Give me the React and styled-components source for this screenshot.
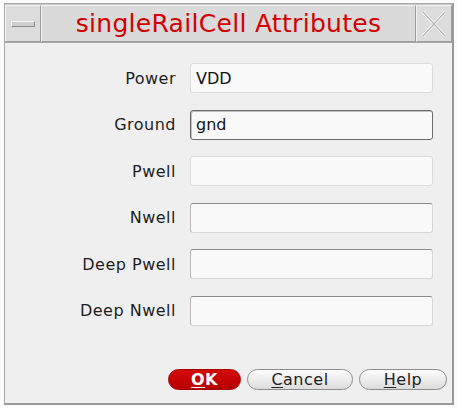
import styled, { createGlobalStyle } from "styled-components";

const GlobalStyle = createGlobalStyle`
  html, body {
    margin: 0;
    padding: 0;
    background: #fbfbfb;
    font-family: "DejaVu Sans", "Liberation Sans", sans-serif;
  }
`;

const fields = [
  { label: "Power", value: "VDD", look: "flat" },
  { label: "Ground", value: "gnd", look: "focus" },
  { label: "Pwell", value: "", look: "flat" },
  { label: "Nwell", value: "", look: "sunk" },
  { label: "Deep Pwell", value: "", look: "sunk" },
  { label: "Deep Nwell", value: "", look: "sunk" },
];

export default function App() {
  return (
    <>
      <GlobalStyle />
      <Window>
        <TitleBar>
          <TitleButton>
            <MinBar />
          </TitleButton>
          <Title>singleRailCell Attributes</Title>
          <TitleButton>
            <svg width="28" height="30" viewBox="0 0 28 30">
              <path d="M3 3 L25 27 M25 3 L3 27" stroke="#fafafa" strokeWidth="3" fill="none" />
              <path d="M3 3 L25 27 M25 3 L3 27" stroke="#b4b4b4" strokeWidth="1.2" fill="none" />
            </svg>
          </TitleButton>
        </TitleBar>
        <Form>
          {fields.map((f) => (
            <Row key={f.label}>
              <Label>{f.label}</Label>
              <Field $look={f.look} defaultValue={f.value} />
            </Row>
          ))}
        </Form>
        <Buttons>
          <Button $primary $w={73}>
            <u>O</u>K
          </Button>
          <Button $w={106}>
            <u>C</u>ancel
          </Button>
          <Button $w={88}>
            <u>H</u>elp
          </Button>
        </Buttons>
      </Window>
    </>
  );
}

const Window = styled.div`
  box-sizing: border-box;
  margin: 3px 0 0 4px;
  width: 450px;
  height: 402px;
  border: 1px solid #a9a9a9;
  border-right: 2px solid #9a9a9a;
  border-bottom: 2px solid #9a9a9a;
  background: #efefef;
  display: flex;
  flex-direction: column;
`;

const TitleBar = styled.div`
  display: flex;
  height: 37px;
  border-top: 1px solid #c8c8c8;
  border-bottom: 1px solid #a8a8a8;
  background: #dadada;
`;

const TitleButton = styled.div`
  box-sizing: border-box;
  width: 36px;
  display: flex;
  align-items: center;
  justify-content: center;
  border-top: 1px solid #f2f2f2;
  border-left: 1px solid #f2f2f2;
  border-right: 1px solid #9c9c9c;
  border-bottom: 1px solid #9c9c9c;
  background: #dcdcdc;
`;

const MinBar = styled.div`
  width: 22px;
  height: 4px;
  background: #cfcfcf;
  border-top: 1px solid #f6f6f6;
  border-left: 1px solid #f6f6f6;
  border-bottom: 1px solid #8a8a8a;
  border-right: 1px solid #8a8a8a;
`;

const Title = styled.div`
  box-sizing: border-box;
  flex: 1;
  display: flex;
  align-items: center;
  justify-content: center;
  font-size: 25px;
  letter-spacing: 0.3px;
  color: #d40000;
  border-top: 1px solid #f2f2f2;
  border-left: 1px solid #f2f2f2;
  border-right: 1px solid #9c9c9c;
  border-bottom: 1px solid #9c9c9c;
  padding-bottom: 1px;
`;

const Form = styled.div`
  display: flex;
  flex-direction: column;
  gap: 16.6px;
  padding: 20px 18px 0 0;
`;

const Row = styled.div`
  display: grid;
  grid-template-columns: 171px 1fr;
  column-gap: 14px;
  align-items: center;
`;

const Label = styled.div`
  text-align: right;
  font-size: 16px;
  letter-spacing: 0.5px;
  color: #1e1e1e;
`;

const fieldBorder = {
  flat: "border: 1px solid #dcdcdc;",
  focus: "border: 1px solid #6a6a6a; box-shadow: inset 1px 1px 0 #c0c0c0;",
  sunk: "border: 1px solid #d6d6d6; border-top-color: #8c8c8c; border-left-color: #b8b8b8;",
};

const Field = styled.input`
  box-sizing: border-box;
  width: 243px;
  height: 30px;
  border-radius: 3px;
  background: #f9f9f9;
  font-family: "DejaVu Sans", "Liberation Sans", sans-serif;
  font-size: 16px;
  color: #111;
  padding: 0 5px;
  outline: none;
  ${(p) => fieldBorder[p.$look]}
`;

const Buttons = styled.div`
  margin-top: auto;
  display: flex;
  justify-content: flex-end;
  gap: 6px;
  padding: 0 5px 13px 0;
`;

const Button = styled.div`
  box-sizing: border-box;
  width: ${(p) => p.$w}px;
  height: 21px;
  border-radius: 11px;
  display: flex;
  align-items: center;
  justify-content: center;
  font-size: 16px;
  letter-spacing: 0.5px;
  ${(p) =>
    p.$primary
      ? `
    background: linear-gradient(#d40a0a, #b80000);
    border: 1px solid #a00000;
    color: #fff;
    font-weight: bold;
  `
      : `
    background: linear-gradient(#fdfdfd, #dcdcdc);
    border: 1px solid #8c8c8c;
    color: #222;
  `}
  u {
    text-underline-offset: 2px;
  }
`;
